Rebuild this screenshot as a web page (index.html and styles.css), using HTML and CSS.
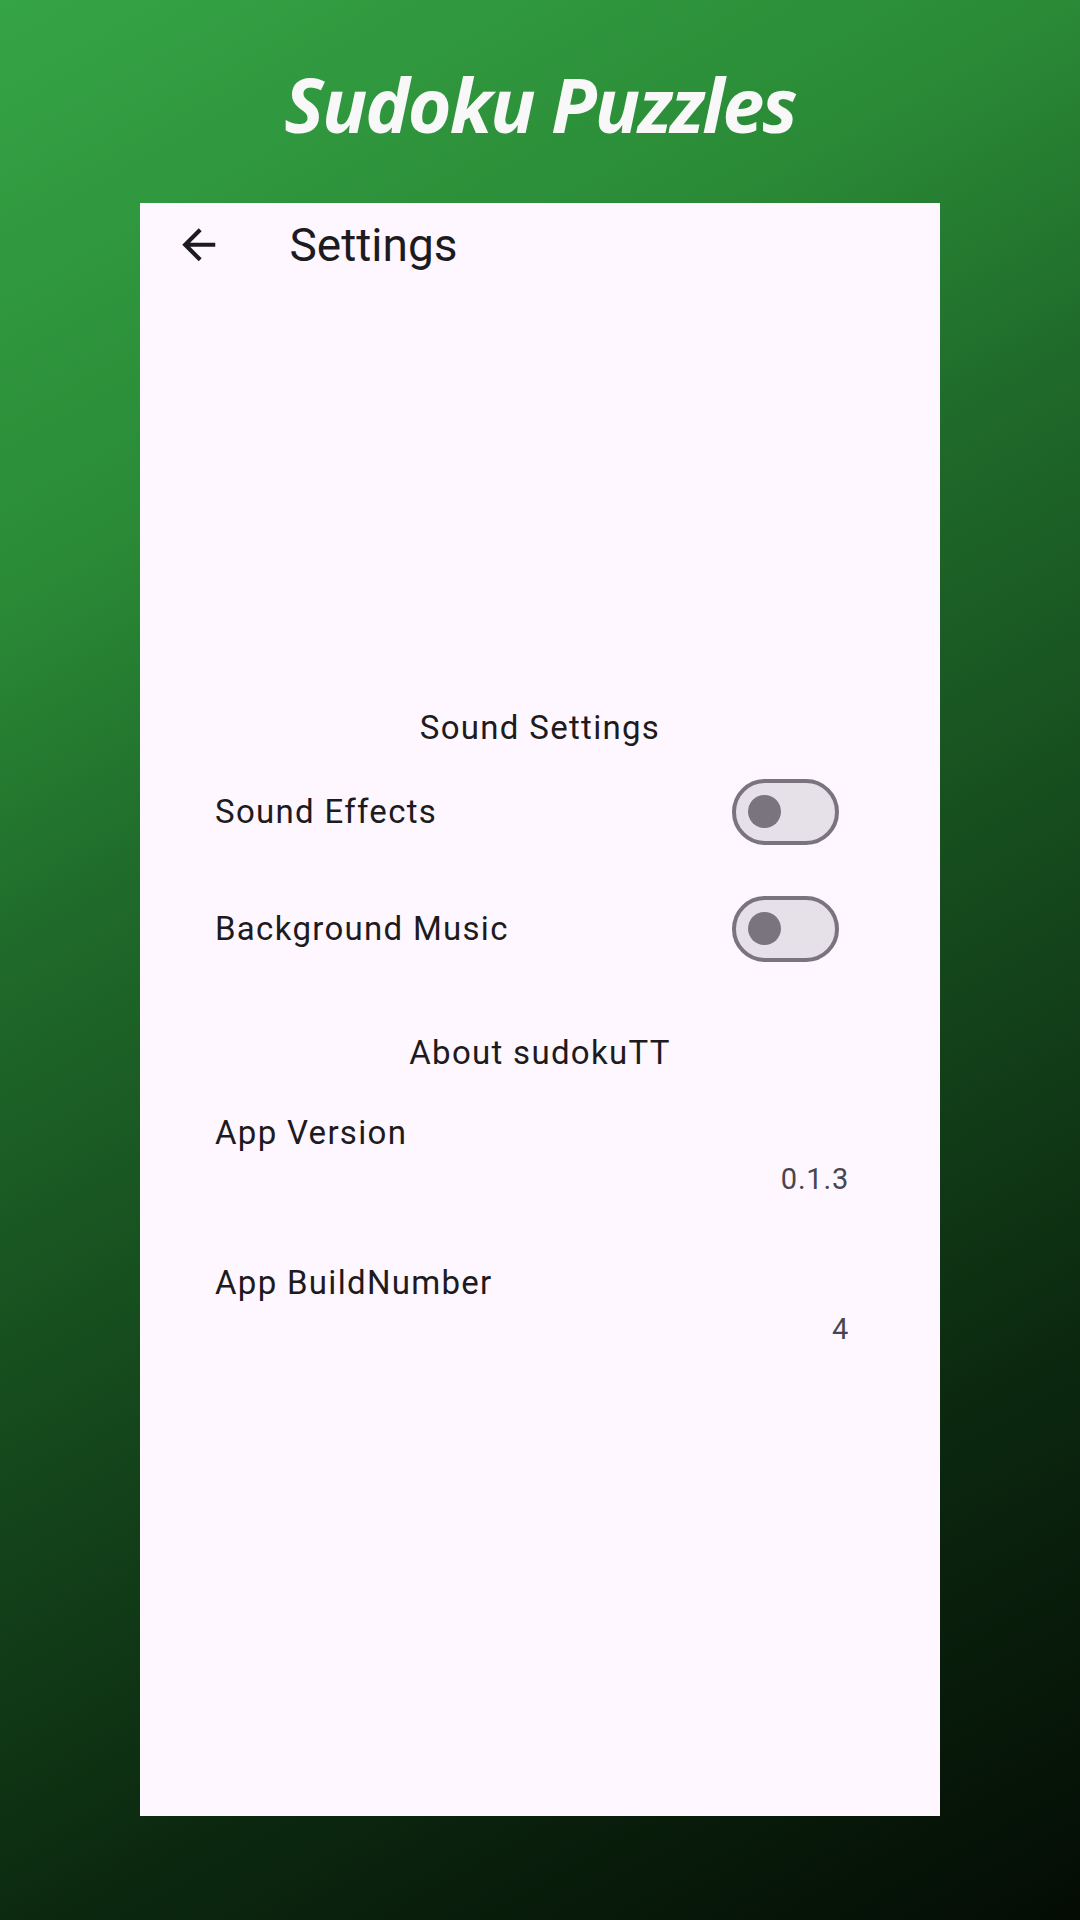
FILE: index.html
```html
<!DOCTYPE html>
<html lang="en">
<head>
<meta charset="utf-8">
<title>Sudoku Puzzles - Settings</title>
<link rel="stylesheet" href="styles.css">
</head>
<body>
<div class="screen">
  <h1 class="app-title">Sudoku Puzzles</h1>
  <main class="card">
    <header class="appbar">
      <button class="back" aria-label="Back">
        <svg viewBox="0 0 24 24" width="49.5" height="49.5"><path d="M20 11H7.83l5.59-5.59L12 4l-8 8 8 8 1.41-1.41L7.83 13H20v-2z" fill="#1d1b20"/></svg>
      </button>
      <div class="appbar-title">Settings</div>
    </header>

    <section class="section sound">
      <div class="section-title">Sound Settings</div>
      <div class="switch-row">
        <span class="label">Sound Effects</span>
        <span class="switch"><span class="thumb"></span></span>
      </div>
      <div class="switch-row">
        <span class="label">Background Music</span>
        <span class="switch"><span class="thumb"></span></span>
      </div>
    </section>

    <section class="section about">
      <div class="section-title">About sudokuTT</div>
      <div class="info-tile">
        <div class="label">App Version</div>
        <div class="value">0.1.3</div>
      </div>
      <div class="info-tile">
        <div class="label">App BuildNumber</div>
        <div class="value">4</div>
      </div>
    </section>
  </main>
</div>
</body>
</html>
```
FILE: styles.css
```css
html, body {
  margin: 0;
  padding: 0;
}
body {
  width: 1080px;
  height: 1920px;
  overflow: hidden;
  background: linear-gradient(150.64deg, #35a446 0%, #2a8a36 24%, #1f6a2a 38%, #0c2a10 76%, #040c04 100%);
  font-family: Roboto, "Noto Sans", sans-serif;
  color: #1d1b20;
}
.screen {
  display: flex;
  flex-direction: column;
  align-items: center;
  padding-top: 54px;
}
.app-title {
  margin: 0;
  height: 100px;
  line-height: 100px;
  font-family: "Open Sans", "Noto Sans", sans-serif;
  font-weight: 700;
  font-style: italic;
  font-size: 75px;
  letter-spacing: -2px;
  color: #f8f8f8;
}
.card {
  margin-top: 49px;
  width: 800px;
  height: 1613px;
  background: #fef7ff;
  display: flex;
  flex-direction: column;
}
.appbar {
  height: 84px;
  display: flex;
  align-items: center;
  padding-left: 34px;
}
.back {
  border: 0;
  background: none;
  padding: 0;
  width: 49.5px;
  height: 49.5px;
  display: flex;
}
.appbar-title {
  margin-left: 66px;
  font-size: 46px;
  line-height: 52px;
  color: #1d1b20;
}
.section {
  display: flex;
  flex-direction: column;
}
.sound {
  margin-top: 421px;
}
.section-title {
  text-align: center;
  font-size: 33px;
  line-height: 40px;
  letter-spacing: 1.3px;
}
.label {
  font-size: 33px;
  line-height: 40px;
  letter-spacing: 1.3px;
}
.switch-row {
  height: 117px;
  display: flex;
  align-items: center;
  justify-content: space-between;
  padding-left: 75px;
  padding-right: 101px;
}
.sound .section-title + .switch-row {
  margin-top: 5px;
}
.switch {
  width: 107px;
  height: 66px;
  box-sizing: border-box;
  border: 4px solid #79747e;
  border-radius: 33px;
  background: #e6e0e9;
  display: flex;
  align-items: center;
  padding-left: 12px;
}
.thumb {
  width: 33px;
  height: 33px;
  border-radius: 50%;
  background: #79747e;
}
.about {
  margin-top: 46px;
}
.info-tile {
  display: flex;
  flex-direction: column;
  padding-left: 75px;
  padding-right: 91px;
}
.about .section-title + .info-tile {
  margin-top: 40px;
}
.info-tile + .info-tile {
  margin-top: 66px;
}
.value {
  margin-top: 8px;
  text-align: right;
  font-size: 29px;
  line-height: 36px;
  letter-spacing: 0.8px;
  color: #49454f;
}
```
